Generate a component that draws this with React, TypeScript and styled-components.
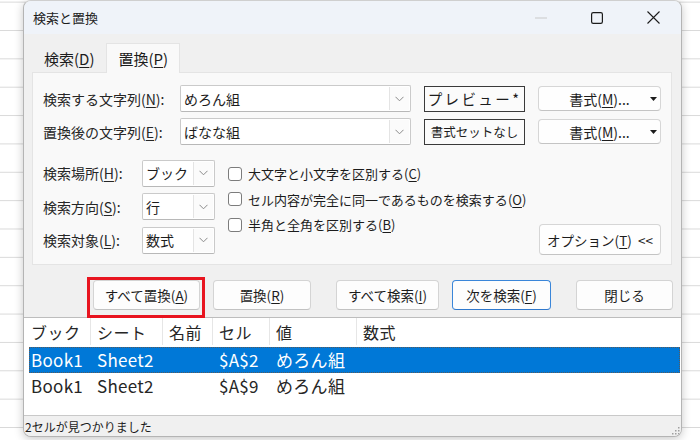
import { Fragment } from "react";
import styled, { createGlobalStyle } from "styled-components";

const GlobalStyle = createGlobalStyle`
  html, body {
    margin: 0;
    padding: 0;
  }
  body {
    width: 700px;
    height: 440px;
    overflow: hidden;
    background-color: #ffffff;
    background-image: linear-gradient(to bottom, #d9d9d9 0, #d9d9d9 1px, transparent 1px);
    background-size: 100% 28.36px;
    background-position: 0 1.64px;
    font-family: "Noto Sans CJK JP", "Noto Sans", sans-serif;
    color: #1c1c1c;
  }
`;

const Desktop = styled.div`
  width: 700px;
  height: 440px;
  padding-left: 23px;
  box-sizing: border-box;
`;

const Dialog = styled.div`
  width: 659px;
  height: 437px;
  box-sizing: border-box;
  border: 1px solid #b4b4b4;
  border-top-color: #cfcfcf;
  border-radius: 8px;
  background: #f0f0f0;
  box-shadow: 0 2px 10px rgba(0, 0, 0, 0.22);
  overflow: hidden;
  display: flex;
  flex-direction: column;
`;

const TitleBar = styled.div`
  flex: none;
  height: 33px;
  display: flex;
  align-items: center;
  padding-left: 9px;
  background: #eff3f9;
`;

const Title = styled.span`
  font-size: 13px;
  color: #1c1c1c;
`;

const WindowControls = styled.div`
  margin-left: auto;
  display: flex;
  height: 100%;
`;

const ControlButton = styled.div`
  width: 56px;
  height: 100%;
  display: flex;
  align-items: center;
  justify-content: center;
`;

const TabStrip = styled.div`
  flex: none;
  height: 38px;
  display: flex;
  align-items: flex-end;
  padding-left: 8px;
`;

const Tab = styled.div<{ $active?: boolean }>`
  position: relative;
  z-index: 1;
  height: 30px;
  margin-bottom: -1px;
  padding: 0 11px;
  display: flex;
  align-items: center;
  font-size: 15px;
  color: #1c1c1c;
  box-sizing: border-box;
  background: ${(p) => (p.$active ? "#f9f9f9" : "transparent")};
  border: 1px solid ${(p) => (p.$active ? "#e4e4e4" : "transparent")};
  border-bottom: none;
`;

const Key = styled.span`
  text-decoration: underline;
  text-decoration-thickness: 1px;
  text-underline-offset: 2px;
`;

const Panel = styled.div`
  flex: none;
  height: 193px;
  margin: 0 9px 0 8px;
  box-sizing: border-box;
  padding: 12px 10px 0;
  background: #f9f9f9;
  border: 1px solid #e4e4e4;
  display: flex;
  flex-direction: column;
`;

const TextRows = styled.div`
  display: flex;
  flex-direction: column;
  gap: 6px;
`;

const FieldRow = styled.div`
  height: 27px;
  display: flex;
  align-items: center;
  gap: 13px;
`;

const FieldLabel = styled.div<{ $w: number }>`
  flex: none;
  width: ${(p) => p.$w}px;
  font-size: 14px;
  color: #262626;
  white-space: nowrap;
`;

const Combo = styled.div<{ $w: number }>`
  flex: none;
  width: ${(p) => p.$w}px;
  height: 27px;
  box-sizing: border-box;
  border: 1px solid #cacaca;
  border-bottom-color: #b8b8b8;
  border-radius: 2px;
  background: #ffffff;
  display: flex;
`;

const ComboText = styled.div`
  flex: 1;
  display: flex;
  align-items: center;
  padding-left: 3px;
  font-size: 14px;
  color: #1c1c1c;
  white-space: nowrap;
`;

const DropButton = styled.div`
  flex: none;
  width: 19px;
  margin: 1px;
  border-left: 1px solid #e4e4e4;
  background: #fbfbfb;
  display: flex;
  align-items: center;
  justify-content: center;
`;

const PreviewBox = styled.div<{ $spaced?: boolean }>`
  flex: none;
  width: 101px;
  height: 26px;
  box-sizing: border-box;
  border: 1px solid #3a3a3a;
  background: #fbfbfb;
  display: flex;
  align-items: center;
  justify-content: center;
  font-size: ${(p) => (p.$spaced ? "14.5px" : "12.5px")};
  letter-spacing: ${(p) => (p.$spaced ? "2.4px" : "0")};
  color: #1c1c1c;
  white-space: nowrap;
`;

const FormatButton = styled.div`
  flex: none;
  width: 123px;
  height: 25px;
  box-sizing: border-box;
  border: 1px solid #d6d6d6;
  border-bottom-color: #c4c4c4;
  border-radius: 4px;
  background: #fefefe;
  display: flex;
  align-items: center;
  padding-left: 14px;
  font-size: 14px;
  color: #1c1c1c;
`;

const FormatText = styled.span`
  flex: 1;
  text-align: center;
`;

const Caret = styled.span`
  flex: none;
  width: 14px;
  display: flex;
  justify-content: center;
`;

const Options = styled.div`
  margin-top: 14px;
  display: flex;
  align-items: flex-start;
`;

const ScopeGrid = styled.div`
  display: grid;
  grid-template-columns: 99px 73px;
  grid-auto-rows: 28px;
  row-gap: 5.5px;
  align-items: center;
`;

const CheckList = styled.div`
  margin: 2px 0 0 13px;
  display: flex;
  flex-direction: column;
`;

const CheckRow = styled.div`
  height: 25.5px;
  display: flex;
  align-items: center;
  gap: 6px;
  font-size: 13px;
  color: #1c1c1c;
  white-space: nowrap;
`;

const CheckBox = styled.span`
  flex: none;
  width: 14px;
  height: 14px;
  box-sizing: border-box;
  border: 1px solid #7c7c7c;
  border-radius: 3px;
  background: #ffffff;
`;

const OptionButton = styled.div`
  margin: 65px 0 0 auto;
  width: 122px;
  height: 31px;
  box-sizing: border-box;
  border: 1px solid #d6d6d6;
  border-bottom-color: #c4c4c4;
  border-radius: 4px;
  background: #fefefe;
  display: flex;
  align-items: center;
  justify-content: center;
  font-size: 13.5px;
  color: #1c1c1c;
  white-space: nowrap;
`;

const ButtonRow = styled.div`
  flex: none;
  height: 30px;
  margin: 15px 0 7px;
  padding-left: 69px;
  display: flex;
  align-items: flex-start;
`;

const Highlight = styled.div`
  position: relative;
  z-index: 2;
  display: flex;
  border: 3px solid #e8141f;
  padding: 0 2px 5px 3px;
  margin: -3px -5px -8px -6px;
`;

const DialogButton = styled.div<{ $w: number; $ml?: number; $primary?: boolean }>`
  flex: none;
  width: ${(p) => p.$w}px;
  height: 30px;
  margin-left: ${(p) => p.$ml ?? 0}px;
  box-sizing: border-box;
  border: 1px solid ${(p) => (p.$primary ? "#3a86d9" : "#d4d4d4")};
  border-bottom-color: ${(p) => (p.$primary ? "#2f78cc" : "#c2c2c2")};
  border-radius: 4px;
  background: #fdfdfd;
  display: flex;
  align-items: center;
  justify-content: center;
  font-size: 13.5px;
  color: #1c1c1c;
  white-space: nowrap;
`;

const ResultList = styled.div`
  flex: 1;
  min-height: 0;
  background: #ffffff;
  border-top: 1px solid #bdbdbd;
  padding: 0 1px 0 5px;
  display: flex;
  flex-direction: column;
`;

const COLUMNS = "62px 72px 50px 57px 87px 1fr";

const HeaderRow = styled.div`
  height: 27px;
  margin-bottom: 2px;
  display: grid;
  grid-template-columns: ${COLUMNS};
  font-size: 16px;
  letter-spacing: 0.5px;
  color: #262626;
`;

const HeaderCell = styled.div`
  display: flex;
  align-items: center;
  padding-left: 6px;
  border-right: 1px solid #e6e6e6;
  white-space: nowrap;
  &:first-child {
    padding-left: 2px;
  }
  &:last-child {
    border-right: none;
  }
`;

const DataRow = styled.div<{ $selected?: boolean }>`
  height: 25.5px;
  display: grid;
  grid-template-columns: ${COLUMNS};
  font-size: 17px;
  letter-spacing: 0.3px;
  color: ${(p) => (p.$selected ? "#ffffff" : "#262626")};
  background: ${(p) => (p.$selected ? "#0078d7" : "transparent")};
  outline: ${(p) => (p.$selected ? "1px dotted #5a5a5a" : "none")};
  outline-offset: -1px;
`;

const DataCell = styled.div`
  display: flex;
  align-items: center;
  padding-left: 6px;
  white-space: nowrap;
  &:first-child {
    padding-left: 2px;
  }
`;

const StatusBar = styled.div`
  flex: none;
  height: 21px;
  box-sizing: border-box;
  border-top: 1px solid #c9c9c9;
  background: #f0f0f0;
  padding: 1px 0 0 1px;
  display: flex;
  align-items: center;
  font-size: 12px;
  color: #1c1c1c;
`;

const Grip = styled.span`
  margin-left: auto;
  align-self: flex-end;
  display: flex;
`;

function Chevron() {
  return (
    <svg width="9" height="6" viewBox="0 0 9 6">
      <polyline points="0.5,0.8 4.5,4.8 8.5,0.8" fill="none" stroke="#8a8a8a" strokeWidth="1" />
    </svg>
  );
}

function DropCombo({ w, value }: { w: number; value: string }) {
  return (
    <Combo $w={w}>
      <ComboText>{value}</ComboText>
      <DropButton>
        <Chevron />
      </DropButton>
    </Combo>
  );
}

function FormatMenu() {
  return (
    <FormatButton>
      <FormatText>
        書式(<Key>M</Key>)...
      </FormatText>
      <Caret>
        <svg width="7" height="4" viewBox="0 0 7 4">
          <polygon points="0,0 7,0 3.5,4" fill="#1c1c1c" />
        </svg>
      </Caret>
    </FormatButton>
  );
}

const scopes = [
  { label: "検索場所", key: "H", value: "ブック" },
  { label: "検索方向", key: "S", value: "行" },
  { label: "検索対象", key: "L", value: "数式" },
];

const checks = [
  { text: "大文字と小文字を区別する", key: "C" },
  { text: "セル内容が完全に同一であるものを検索する", key: "O" },
  { text: "半角と全角を区別する", key: "B" },
];

const results = [
  { book: "Book1", sheet: "Sheet2", cell: "$A$2", value: "めろん組", selected: true },
  { book: "Book1", sheet: "Sheet2", cell: "$A$9", value: "めろん組", selected: false },
];

export default function App() {
  return (
    <Desktop>
      <GlobalStyle />
      <Dialog>
        <TitleBar>
          <Title>検索と置換</Title>
          <WindowControls>
            <ControlButton>
              <svg width="12" height="2" viewBox="0 0 12 2">
                <line x1="0" y1="1" x2="12" y2="1" stroke="#c9c9c9" strokeWidth="1" />
              </svg>
            </ControlButton>
            <ControlButton>
              <svg width="12" height="12" viewBox="0 0 12 12">
                <rect x="0.6" y="0.6" width="10.8" height="10.8" rx="1.6" fill="none" stroke="#1c1c1c" strokeWidth="1.2" />
              </svg>
            </ControlButton>
            <ControlButton>
              <svg width="13" height="13" viewBox="0 0 13 13">
                <path d="M0.5 0.5 L12.5 12.5 M12.5 0.5 L0.5 12.5" stroke="#1c1c1c" strokeWidth="1.1" />
              </svg>
            </ControlButton>
          </WindowControls>
        </TitleBar>

        <TabStrip>
          <Tab>
            検索(<Key>D</Key>)
          </Tab>
          <Tab $active>
            置換(<Key>P</Key>)
          </Tab>
        </TabStrip>

        <Panel>
          <TextRows>
            <FieldRow>
              <FieldLabel $w={124}>
                検索する文字列(<Key>N</Key>):
              </FieldLabel>
              <DropCombo w={231} value="めろん組" />
              <PreviewBox $spaced>プレビュー*</PreviewBox>
              <FormatMenu />
            </FieldRow>
            <FieldRow>
              <FieldLabel $w={124}>
                置換後の文字列(<Key>E</Key>):
              </FieldLabel>
              <DropCombo w={231} value="ばなな組" />
              <PreviewBox>書式セットなし</PreviewBox>
              <FormatMenu />
            </FieldRow>
          </TextRows>

          <Options>
            <ScopeGrid>
              {scopes.map((s) => (
                <Fragment key={s.key}>
                  <FieldLabel $w={99}>
                    {s.label}(<Key>{s.key}</Key>):
                  </FieldLabel>
                  <DropCombo w={73} value={s.value} />
                </Fragment>
              ))}
            </ScopeGrid>
            <CheckList>
              {checks.map((c) => (
                <CheckRow key={c.key}>
                  <CheckBox />
                  <span>
                    {c.text}(<Key>{c.key}</Key>)
                  </span>
                </CheckRow>
              ))}
            </CheckList>
            <OptionButton>
              オプション(<Key>T</Key>)&nbsp;&nbsp;&lt;&lt;
            </OptionButton>
          </Options>
        </Panel>

        <ButtonRow>
          <Highlight>
            <DialogButton $w={107}>
              すべて置換(<Key>A</Key>)
            </DialogButton>
          </Highlight>
          <DialogButton $w={98} $ml={13}>
            置換(<Key>R</Key>)
          </DialogButton>
          <DialogButton $w={103} $ml={25}>
            すべて検索(<Key>I</Key>)
          </DialogButton>
          <DialogButton $w={99} $ml={13} $primary>
            次を検索(<Key>F</Key>)
          </DialogButton>
          <DialogButton $w={97} $ml={25}>
            閉じる
          </DialogButton>
        </ButtonRow>

        <ResultList>
          <HeaderRow>
            <HeaderCell>ブック</HeaderCell>
            <HeaderCell>シート</HeaderCell>
            <HeaderCell>名前</HeaderCell>
            <HeaderCell>セル</HeaderCell>
            <HeaderCell>値</HeaderCell>
            <HeaderCell>数式</HeaderCell>
          </HeaderRow>
          {results.map((r) => (
            <DataRow key={r.cell} $selected={r.selected}>
              <DataCell>{r.book}</DataCell>
              <DataCell>{r.sheet}</DataCell>
              <DataCell />
              <DataCell>{r.cell}</DataCell>
              <DataCell>{r.value}</DataCell>
              <DataCell />
            </DataRow>
          ))}
        </ResultList>

        <StatusBar>
          2セルが見つかりました
          <Grip>
            <svg width="10" height="10" viewBox="0 0 10 10">
              <rect x="7" y="7" width="1.5" height="1.5" fill="#a0a0a0" />
              <rect x="4" y="7" width="1.5" height="1.5" fill="#a0a0a0" />
              <rect x="7" y="4" width="1.5" height="1.5" fill="#a0a0a0" />
              <rect x="1" y="7" width="1.5" height="1.5" fill="#a0a0a0" />
              <rect x="4" y="4" width="1.5" height="1.5" fill="#a0a0a0" />
              <rect x="7" y="1" width="1.5" height="1.5" fill="#a0a0a0" />
            </svg>
          </Grip>
        </StatusBar>
      </Dialog>
    </Desktop>
  );
}
